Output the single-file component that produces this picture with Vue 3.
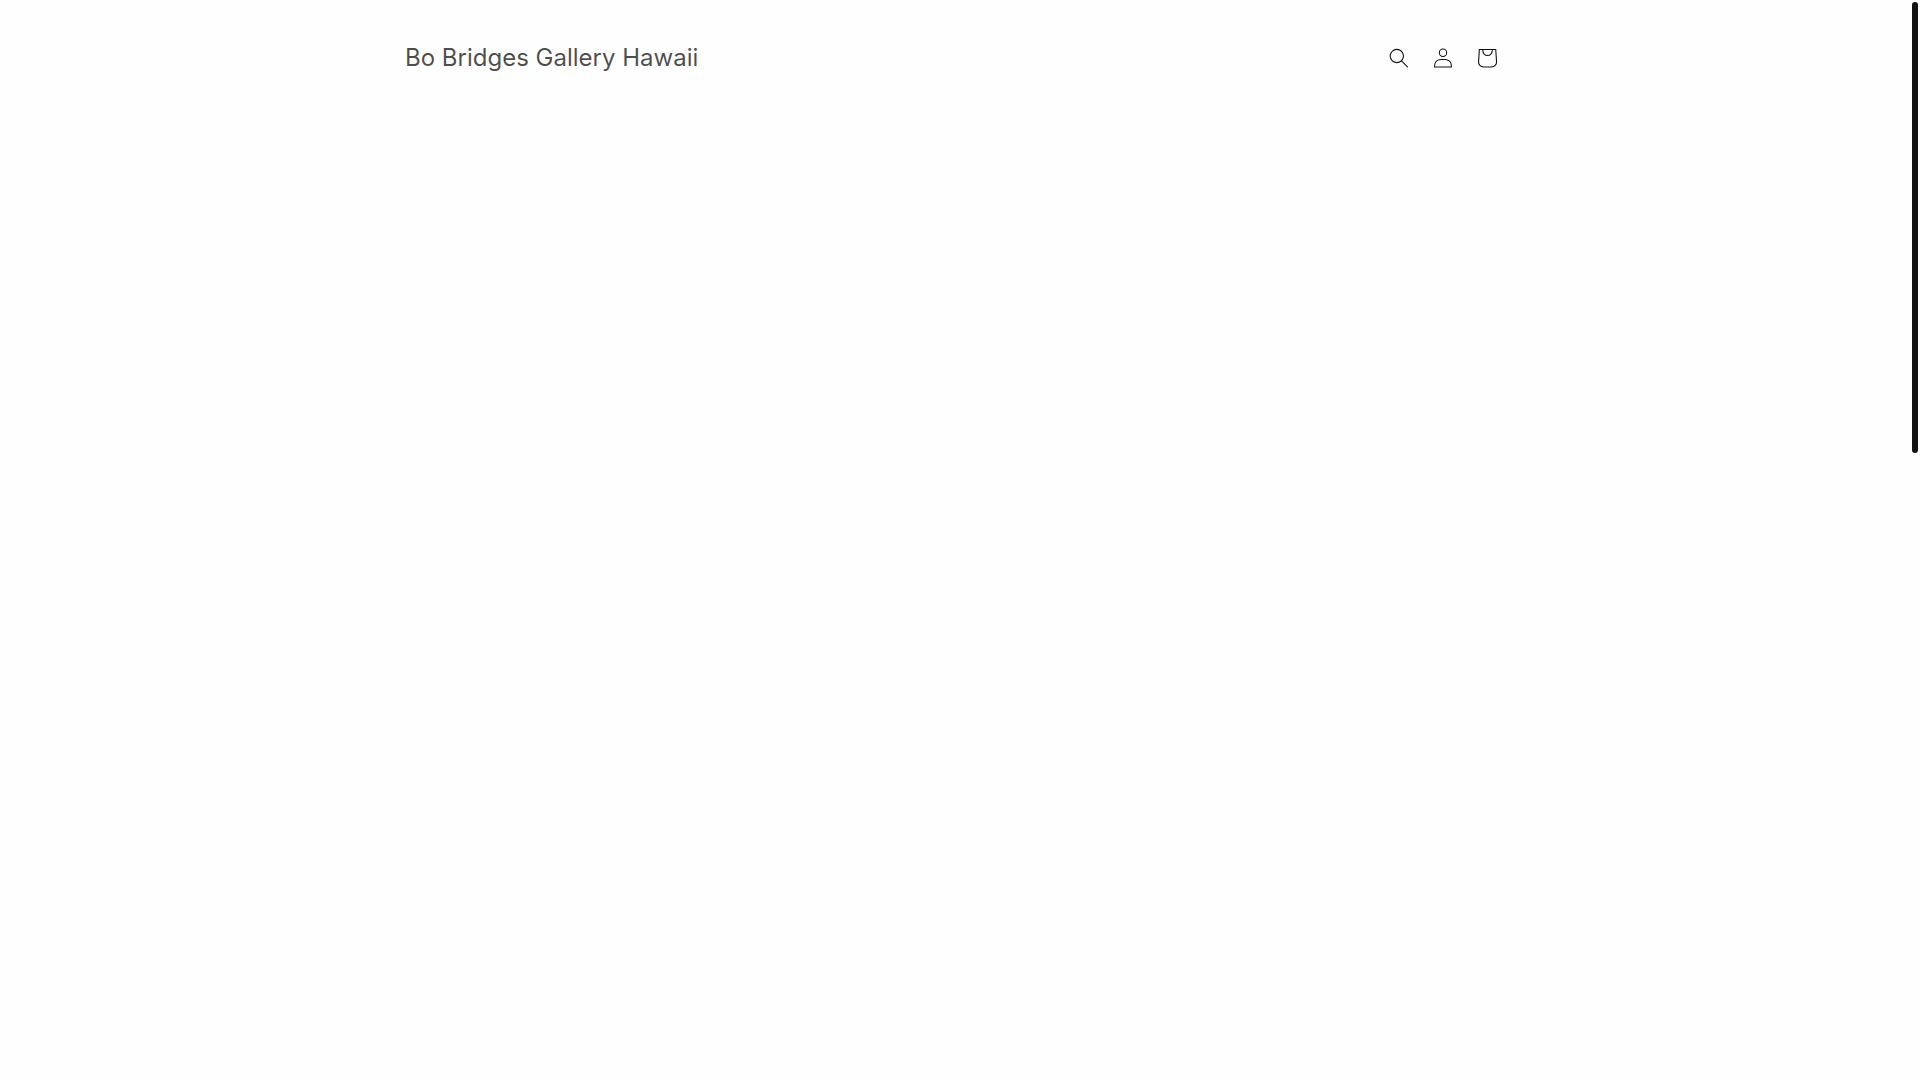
<script setup>
const actions = [
  {
    label: 'Search',
    viewBox: '0 0 18 19',
    size: 20,
    path: 'M11.03 11.68A5.784 5.784 0 112.85 3.5a5.784 5.784 0 018.18 8.18zm.26 1.12a6.78 6.78 0 11.72-.7l5.4 5.4a.5.5 0 11-.71.7l-5.41-5.4z'
  },
  {
    label: 'Log in',
    href: '#account',
    viewBox: '0 0 18 19',
    size: 20,
    path: 'M6 4.5a3 3 0 116 0 3 3 0 01-6 0zm3-4a4 4 0 100 8 4 4 0 000-8zm5.58 12.15c1.12.82 1.83 2.24 1.91 4.85H1.51c.08-2.6.79-4.03 1.9-4.85C4.66 11.75 6.5 11.5 9 11.5s4.35.26 5.58 1.15zM9 10.5c-2.5 0-4.65.24-6.17 1.35C1.27 12.98.5 14.93.5 18v.5h17V18c0-3.07-.77-5.02-2.33-6.15-1.52-1.1-3.67-1.35-6.17-1.35z'
  },
  {
    label: 'Cart',
    href: '#cart',
    viewBox: '0 0 40 40',
    size: 44,
    path: 'M15.75 11.8h-3.16l-.77 11.6a5 5 0 0 0 4.99 5.34h7.38a5 5 0 0 0 4.99-5.33L28.4 11.8zm0 1h-2.22l-.71 10.67a4 4 0 0 0 3.99 4.27h7.38a4 4 0 0 0 4-4.27l-.72-10.67h-2.22v.63a4.75 4.75 0 1 1-9.5 0zm8.5 0h-7.5v.63a3.75 3.75 0 1 0 7.5 0z'
  }
]
</script>

<template>
  <div class="page">
    <header class="header">
      <h1 class="heading"><a class="brand" href="#home">Bo Bridges Gallery Hawaii</a></h1>
      <div class="actions">
        <component
          :is="action.href ? 'a' : 'button'"
          v-for="action in actions"
          :key="action.label"
          class="action"
          :href="action.href"
          :type="action.href ? undefined : 'button'"
          :aria-label="action.label"
        >
          <svg :viewBox="action.viewBox" :width="action.size" :height="action.size" aria-hidden="true">
            <path :d="action.path" fill="currentColor" fill-rule="evenodd" clip-rule="evenodd" />
          </svg>
        </component>
      </div>
    </header>
    <main></main>
    <div class="scroll-thumb" aria-hidden="true"></div>
  </div>
</template>

<style>
body {
  background: #fefefe;
}
</style>

<style scoped>
.page {
  min-height: 100vh;
  box-sizing: border-box;
  padding-right: 6px;
  font-family: Inter, "Liberation Sans", sans-serif;
  color: #121212;
}

.header {
  display: flex;
  align-items: center;
  justify-content: space-between;
  max-width: 1104px;
  margin: 0 auto;
  padding: 36px 0;
}

.heading {
  margin: 0;
  font-size: 24px;
  font-weight: 400;
  line-height: 32px;
}

.brand {
  color: rgba(18, 18, 18, 0.75);
  text-decoration: none;
}

.actions {
  display: flex;
}

.action {
  display: flex;
  align-items: center;
  justify-content: center;
  width: 44px;
  height: 44px;
  padding: 0;
  border: 0;
  background: transparent;
  color: #121212;
  cursor: pointer;
}

.scroll-thumb {
  position: fixed;
  top: 2px;
  right: 2px;
  width: 6px;
  height: 42vh;
  max-height: 451px;
  border-radius: 3px;
  background: #121212;
}
</style>
